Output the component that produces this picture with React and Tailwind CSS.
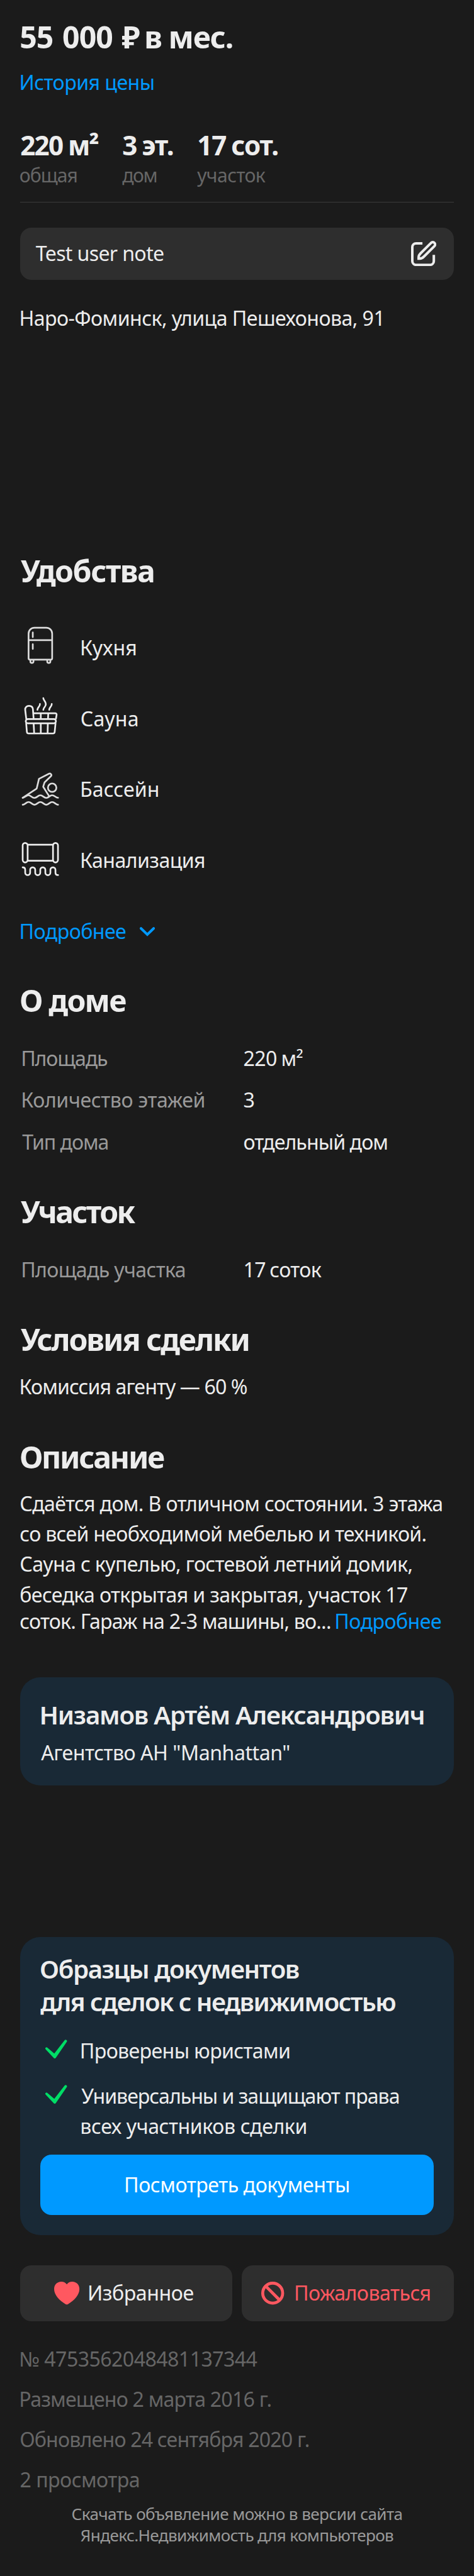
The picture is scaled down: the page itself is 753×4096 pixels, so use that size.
import React from "react";

const H2 = "h-[56px] whitespace-nowrap text-[48.2px] font-bold leading-[56px]";
const BODY = "whitespace-nowrap text-[32.13px] leading-[40px]";

function FridgeIcon() {
  return (
    <svg viewBox="0 0 96 96" className="size-[64.26px] shrink-0" fill="none" stroke="#dcdcdc" strokeWidth="4" strokeLinecap="round">
      <path d="M20 20A14 14 0 0 1 34 6.1H62A14 14 0 0 1 76 20V79Q76 82 73 82H23Q20 82 20 79ZM20 35.8H76" />
      <path d="M30 17.5V28.5M30 45.5V56.5" />
      <path d="M24.3 83V86.3A3.7 3.7 0 0 0 31.7 86.3V83M64.3 83V86.3A3.7 3.7 0 0 0 71.7 86.3V83" />
    </svg>
  );
}

function SaunaIcon() {
  return (
    <svg viewBox="0 0 96 96" className="size-[64.26px] shrink-0" fill="none" stroke="#ededed" strokeWidth="4" strokeLinecap="round" strokeLinejoin="round">
      <path d="M55 6C55 12 61 13 61 20S55 28 55 34M47 20C47 27 41 27 41 34M75 20C75 27 69 27 69 34" />
      <path d="M14.5 55L12 34C11.5 28 16 24.5 21 24.5S29.7 27 30.3 32L32 55" />
      <path d="M31.5 42H83Q87 42 86.5 46L85 55" />
      <rect x="13.3" y="55.8" width="71.7" height="10.1" rx="5" />
      <path d="M14.3 66L16 86Q16.5 90 20 90H78Q81.5 90 82 86L84 66" />
      <path d="M49 42V55M66.7 42L66.2 55M32 66L33.3 90M49 66V90M65.7 66L65.2 90" strokeLinecap="butt" />
    </svg>
  );
}

function PoolIcon() {
  return (
    <svg viewBox="0 0 96 96" className="size-[64.26px] shrink-0" fill="none" stroke="#dcdcdc" strokeWidth="4" strokeLinecap="round" strokeLinejoin="round">
      <path d="M6 90.5C12 90.5 14 84 20 84S28 90.5 34 90.5 42 84 48 84 56 90.5 62 90.5 70 84 76 84 84 90.5 90 90.5" />
      <path d="M6 74C10 74 15 68 20 68S28 74.3 34 74.3 42 68 48 68 56 74.3 62 74.3 70 68 76 68 84 74 90 74" />
      <path d="M6 74L39.3 52L44.7 29L68.5 16.8C72.5 15 76 19.5 73 22.8L58 37.3L54.7 47.7L68.7 70" />
      <circle cx="76" cy="50" r="10" />
    </svg>
  );
}

function SewerIcon() {
  return (
    <svg viewBox="0 0 96 96" className="size-[64.26px] shrink-0" fill="none" stroke="#ededed" strokeWidth="4" strokeLinecap="round">
      <rect x="6" y="14" width="11.8" height="46.2" rx="5.9" />
      <rect x="78" y="14" width="11.8" height="46.2" rx="5.9" />
      <path d="M18 18H78M18 56.1H78" />
      <path d="M6 72C10 72 12 74 12 78V84.5A5.9 5.9 0 0 0 23.8 84.5V77.8A6 6 0 0 1 35.8 77.8V84.5A6 6 0 0 0 47.8 84.5V77.8A6 6 0 0 1 59.8 77.8V84.5A6 6 0 0 0 71.8 84.5V77.8A6 6 0 0 1 83.8 77.8V84.3C83.8 88 86 90.3 90 90.3" />
    </svg>
  );
}

function EditIcon() {
  return (
    <svg viewBox="0 0 60 60" className="size-[40.2px] shrink-0" fill="none" stroke="#ededed" strokeWidth="6">
      <path d="M27 6H12A9 9 0 0 0 3 15V48A9 9 0 0 0 12 57H45A9 9 0 0 0 54 48V33.4" />
      <path d="M18 42V39C18 35 19.5 32.7 22.7 29.5L47.6 4.6A5.5 5.5 0 0 1 55.4 12.4L30.5 37.3C27.3 40.5 25 42 21 42Z" />
    </svg>
  );
}

function CheckIcon() {
  return (
    <svg viewBox="0 0 52 45" className="mt-[5.9px] h-[30.1px] w-[34.8px] shrink-0" fill="#00dd66">
      <path d="M5 19.3L21.3 33.3L46 1.4A3.3 3.3 0 0 1 51.3 5L25 43.4Q22.3 46.4 19.6 43.4L.7 23A2.8 2.8 0 0 1 5 19.3Z" />
    </svg>
  );
}

const amenities = [
  { Icon: FridgeIcon, label: "Кухня", track: "indent-[-1.6px] tracking-[0.02px]" },
  { Icon: SaunaIcon, label: "Сауна", track: "indent-[-0.8px] tracking-[0.2px]" },
  { Icon: PoolIcon, label: "Бассейн", track: "indent-[-1.6px] tracking-[0.09px]" },
  { Icon: SewerIcon, label: "Канализация", track: "indent-[-1.6px] tracking-[-0.6px]" },
];

const stats = [
  { value: "220 м²", label: "общая", col: "w-[162px]", vt: "tracking-[-1.7px] [word-spacing:-0.8px]", lt: "indent-[-1.4px] tracking-[-0.97px]" },
  { value: "3 эт.", label: "дом", col: "w-[119px]", vt: "tracking-[-1.1px] [word-spacing:-1.5px]", lt: "tracking-[-1.33px]" },
  { value: "17 сот.", label: "участок", col: "w-[160px]", vt: "tracking-[-1.1px] [word-spacing:-1.7px]", lt: "tracking-[-0.58px]" },
];

const house = [
  { label: "Площадь", lt: "indent-[-1px] tracking-[-1.13px]", value: "220 м²", vt: "tracking-[-0.65px] [word-spacing:-1px]" },
  { label: "Количество этажей", lt: "indent-[-1px] tracking-[-0.38px]", value: "3", vt: "" },
  { label: "Тип дома", lt: "indent-[1px] tracking-[-1.08px]", value: "отдельный дом", vt: "tracking-[-0.93px]" },
];

const plot = [{ label: "Площадь участка", lt: "indent-[-1px] tracking-[-0.66px]", value: "17 соток", vt: "tracking-[-0.6px] [word-spacing:-1.6px]" }];

function Specs({ rows }) {
  return (
    <dl className="flex flex-col gap-[26.3px] pl-[2px]">
      {rows.map((r) => (
        <div key={r.label} className={`flex ${BODY}`}>
          <dt className={`w-[352.4px] text-[#999999] ${r.lt}`}>{r.label}</dt>
          <dd className={r.vt}>{r.value}</dd>
        </div>
      ))}
    </dl>
  );
}

export default function App() {
  return (
    <main className="h-[4096px] w-[753px] overflow-hidden bg-[#1b1b1b] px-[32.13px] pt-[30px] font-['Noto_Sans',sans-serif] text-[#ededed]">
      <h1 className={`indent-[-1px] ${H2}`}>
        <span className="tracking-[-0.9px] [word-spacing:2.9px]">55 000 ₽</span>
        <span className="tracking-[-0.8px] [word-spacing:-4px]"> в</span>
        <span className="tracking-[-1.2px] [word-spacing:-1px]"> мес.</span>
      </h1>
      <a className={`mt-[25px] block indent-[-1.6px] tracking-[-0.55px] text-[#0099ff] ${BODY}`}>История цены</a>

      <div className="mt-[56.2px] flex">
        {stats.map((s) => (
          <div key={s.label} className={`whitespace-nowrap ${s.col}`}>
            <div className={`text-[42.2px] font-bold leading-[48px] ${s.vt}`}>{s.value}</div>
            <div className={`mt-[6px] text-[30.1px] leading-[36px] text-[#666666] ${s.lt}`}>{s.label}</div>
          </div>
        ))}
      </div>
      <div className="mt-[24px] h-px bg-[#3a3a3a]" />

      <div className="mt-[40px] flex h-[82.4px] items-center justify-between rounded-[18px] bg-[#2e2e2e] pl-[24.6px] pr-[28px]">
        <span className={`tracking-[-0.66px] ${BODY}`}>Test user note</span>
        <EditIcon />
      </div>
      <p className={`mt-[41.6px] indent-[-1.6px] tracking-[-0.57px] ${BODY}`}>Наро-Фоминск, улица Пешехонова, 91</p>

      <h2 className={`mt-[352.4px] indent-[0.7px] tracking-[-1.47px] ${H2}`}>Удобства</h2>
      <ul className="mt-[59.3px] flex flex-col gap-[48.25px]">
        {amenities.map(({ Icon, label, track }) => (
          <li key={label} className="flex h-[64.26px] items-center gap-[32.13px]">
            <Icon />
            <span className={`pt-[9px] ${BODY} ${track}`}>{label}</span>
          </li>
        ))}
      </ul>
      <a className={`mt-[65.2px] flex items-start text-[#0099ff] ${BODY}`}>
        <span className="w-[189.4px] indent-[-1.6px] tracking-[-0.56px]">Подробнее</span>
        <svg viewBox="0 0 36 22" className="mt-[13.4px] h-[14.7px] w-[24.1px]" fill="none" stroke="#0099ff" strokeWidth="6" strokeLinecap="round">
          <path d="M3 3.3L18 18L33 3.3" />
        </svg>
      </a>

      <h2 className={`mb-[44.7px] mt-[61.6px] indent-[-1.2px] tracking-[-1.74px] ${H2}`}>О доме</h2>
      <Specs rows={house} />
      <h2 className={`mb-[45px] mt-[62.4px] indent-[0.7px] tracking-[-2.66px] ${H2}`}>Участок</h2>
      <Specs rows={plot} />

      <h2 className={`mt-[62.4px] indent-[0.7px] tracking-[-2.06px] ${H2}`}>Условия сделки</h2>
      <p className={`mt-[28px] indent-[-1.6px] tracking-[-0.92px] ${BODY}`}>Комиссия агенту — 60 %</p>

      <h2 className={`mt-[62.3px] indent-[-1.2px] tracking-[-2.31px] ${H2}`}>Описание</h2>
      <div className="mt-[23.1px] indent-[-0.8px] whitespace-nowrap text-[32.13px] leading-[48.25px]">
        <p className="tracking-[-0.64px]">Сдаётся дом. В отличном состоянии. 3 этажа</p>
        <p className="tracking-[-0.7px]">со всей необходимой мебелью и техникой.</p>
        <p className="tracking-[-0.63px]">Сауна с купелью, гостевой летний домик,</p>
        <p className="tracking-[-0.66px]">беседка открытая и закрытая, участок 17</p>
        <p className="flex leading-[36px]">
          <span className="w-[500px] tracking-[-0.81px]">соток. Гараж на 2-3 машины, во...</span>
          <a className="tracking-[-0.56px] text-[#0099ff]">Подробнее</a>
        </p>
      </div>

      <section className="mt-[71.6px] h-[171.4px] rounded-[32px] bg-[#192936] pl-[32.13px] pt-[36px]">
        <h3 className="indent-[-1.8px] whitespace-nowrap text-[40.2px] font-semibold leading-[48px] tracking-[-1.21px]">Низамов Артём Александрович</h3>
        <p className={`mt-[15.3px] indent-[1px] tracking-[-0.48px] ${BODY}`}>Агентство АН "Manhattan"</p>
      </section>

      <section className="mt-[240.9px] h-[474.3px] rounded-[32px] bg-[#192936] px-[32.13px] pt-[25.4px]">
        <h3 className="whitespace-nowrap text-[40.2px] font-semibold leading-[52.2px]">
          <span className="block indent-[-1.2px] tracking-[-1.4px]">Образцы документов</span>
          <span className="block tracking-[-1.55px]">для сделок с недвижимостью</span>
        </h3>
        <ul className="mt-[27.3px] flex flex-col gap-[24.2px] whitespace-nowrap pl-[8px] text-[32.13px] leading-[48.2px]">
          <li className="flex gap-[21.4px]">
            <CheckIcon />
            <span className="indent-[-1.6px] tracking-[-0.64px]">Проверены юристами</span>
          </li>
          <li className="flex gap-[21.4px]">
            <CheckIcon />
            <span>
              <span className="block indent-[0.7px] tracking-[-1.05px]">Универсальны и защищают права</span>
              <span className="block indent-[-1.1px] tracking-[-0.42px]">всех участников сделки</span>
            </span>
          </li>
        </ul>
        <button className="mt-[19.9px] flex h-[96.4px] w-full items-center justify-center whitespace-nowrap rounded-[18px] bg-[#0099ff] text-[32.13px] leading-[48.2px] tracking-[-0.46px] text-white">Посмотреть документы</button>
      </section>

      <div className="mt-[48.2px] flex justify-between whitespace-nowrap text-[32.13px] leading-[48.2px]">
        <button className="flex h-[88.4px] w-[337px] items-center rounded-[18px] bg-[#2e2e2e] pl-[54.2px]">
          <svg viewBox="0 0 60 54.5" className="mr-[12.4px] h-[36.5px] w-[40.2px] shrink-0" fill="#ff5860">
            <path d="M30 6.3C27 2.2 22.5 0 17 0C7 0 0 7.5 0 17.5C0 31 12 44.5 27 53.2Q30 54.8 33 53.2C48 44.5 60 31 60 17.5C60 7.5 53 0 43 0C37.5 0 33 2.2 30 6.3Z" />
          </svg>
          <span className="tracking-[-0.44px]">Избранное</span>
        </button>
        <button className="flex h-[88.4px] w-[337px] items-center rounded-[18px] bg-[#2e2e2e] pl-[31.5px] text-[#ff5860]">
          <svg viewBox="0 0 54 54" className="mr-[15.2px] size-[36.4px] shrink-0" fill="none" stroke="#ff5860" strokeWidth="7">
            <circle cx="27" cy="27" r="23.5" />
            <path d="M11 11L43 43" />
          </svg>
          <span className="tracking-[-0.51px]">Пожаловаться</span>
        </button>
      </div>

      <div className={`mt-[40.4px] flex flex-col gap-[24.15px] text-[#666666] ${BODY}`}>
        <p className="indent-[-1.8px] tracking-[-0.58px]">№ 4753562048481137344</p>
        <p className="indent-[-1.8px] tracking-[-0.8px]">Размещено 2 марта 2016 г.</p>
        <p className="indent-[-1px] tracking-[-0.82px]">Обновлено 24 сентября 2020 г.</p>
        <p className="indent-[-0.6px] tracking-[-0.54px]">2 просмотра</p>
      </div>

      <p className="mt-[17.7px] whitespace-nowrap text-center text-[26.1px] leading-[33.4px] text-[#999999]">
        <span className="block tracking-[-0.58px]">Скачать объявление можно в версии сайта</span>
        <span className="block tracking-[-0.63px]">Яндекс.Недвижимость для компьютеров</span>
      </p>
    </main>
  );
}
